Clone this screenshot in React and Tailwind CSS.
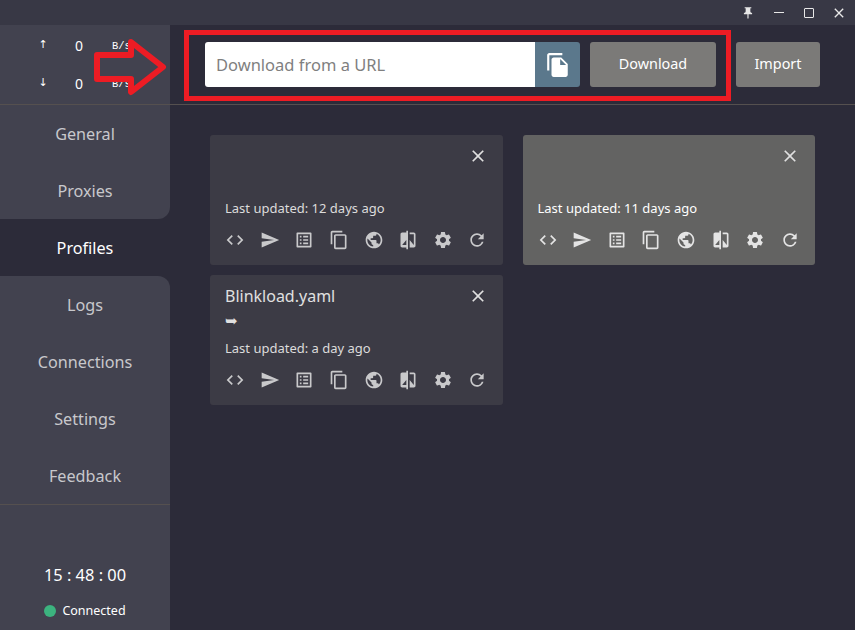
import {
    MdCode, MdSend, MdOutlineListAlt, MdContentCopy, MdPublic, MdCompare, MdSettings, MdRefresh, MdClose, MdFileCopy, MdPushPin,
} from 'react-icons/md';

const font = { fontFamily: '"Noto Sans", "Open Sans", sans-serif' };

const topNav = ['General', 'Proxies'];
const bottomNav = ['Logs', 'Connections', 'Settings', 'Feedback'];
const actions = [MdCode, MdSend, MdOutlineListAlt, MdContentCopy, MdPublic, MdCompare, MdSettings, MdRefresh];

function NavItem({ label, active }) {
    return (
        <div className={`flex h-[57px] items-center justify-center pt-[2px] text-[16.2px] ${active ? 'text-white' : 'text-[#c8c8cc]'}`}>
            {label}
        </div>
    );
}

function StatRow({ arrow }) {
    return (
        <div className="flex h-[38px] items-center pl-[38px] text-white">
            <span className="w-[10px] text-center font-['DejaVu_Sans',sans-serif] text-[11px]">{arrow}</span>
            <span className="ml-[21px] w-[20px] text-center text-[14px]">0</span>
            <span className="ml-[23px] pt-[3px] font-['Liberation_Mono',monospace] text-[10.5px]">B/s</span>
        </div>
    );
}

function ProfileCard({ title, subtitle, updated, selected }) {
    return (
        <div className={`h-[130px] rounded-[3px] px-[15px] pt-[8px] ${selected ? 'bg-[#636362]' : 'bg-[#3c3b45]'}`}>
            <div className="flex h-[26px] items-center justify-between text-[16px] text-[#e0e0e0]">
                <span>{title}</span>
                <MdClose className="size-[20px] text-[#e0e0e0]" />
            </div>
            <div className="flex h-[26px] items-center pb-[3px] text-[15px] text-[#e0e0e0]">{subtitle}</div>
            <div className={`flex h-[26px] items-center pt-[2px] text-[13px] ${selected ? 'text-white' : 'text-[#dcdcdc]'}`}>Last updated: {updated}</div>
            <div className={`mt-[9px] flex h-[20px] justify-between ${selected ? 'text-[#e4e4e4]' : 'text-[#c9c9cb]'}`}>
                {actions.map((Icon, i) => (
                    <Icon key={i} className="size-[20px]" />
                ))}
            </div>
        </div>
    );
}

export default function App() {
    return (
        <div className="relative flex h-[630px] w-[855px] flex-col overflow-hidden bg-[#2c2b39]" style={font}>
            {/* title bar */}
            <div className="flex h-[25px] items-center justify-end bg-[#383845] pr-[1px] text-[#e8e8e8]">
                <span className="flex w-[30px] justify-center"><MdPushPin className="size-[14px]" /></span>
                <span className="flex w-[31px] justify-center"><span className="h-[1.5px] w-[10px] bg-[#e8e8e8]" /></span>
                <span className="flex w-[30px] justify-center"><span className="size-[10px] rounded-[1px] border border-[#e8e8e8]" /></span>
                <span className="flex w-[30px] justify-center"><MdClose className="size-[16px]" /></span>
            </div>

            <div className="flex min-h-0 flex-1">
                {/* sidebar */}
                <div className="flex w-[170px] flex-col">
                    <div className="rounded-br-[12px] bg-[#42424f]">
                        <div className="flex h-[80px] flex-col justify-center border-b border-[#55504f]">
                            <StatRow arrow="↑" />
                            <StatRow arrow="↓" />
                        </div>
                        {topNav.map((n) => <NavItem key={n} label={n} />)}
                    </div>
                    <NavItem label="Profiles" active />
                    <div className="flex flex-1 flex-col rounded-tr-[12px] bg-[#42424f]">
                        {bottomNav.map((n) => <NavItem key={n} label={n} />)}
                        <div className="flex flex-1 flex-col items-center border-t border-[#55504f] pt-[58px] text-white">
                            <div className="text-[16.4px] leading-[24px]">15 : 48 : 00</div>
                            <div className="mt-[15px] flex items-center gap-[6px] text-[12.5px] leading-[18px]">
                                <span className="size-[12px] rounded-full bg-[#3cb37f]" />
                                Connected
                            </div>
                        </div>
                    </div>
                </div>

                {/* main */}
                <div className="flex min-w-0 flex-1 flex-col">
                    <div className="flex h-[80px] items-start border-b border-[#55504f] pt-[17px] pl-[35px]">
                        <div className="flex h-[45px] w-[375px] overflow-hidden rounded-[3px]">
                            <div className="flex w-[330px] items-center bg-white px-[11px] pt-[2px] text-[16.5px] text-[#7f7f7f]">Download from a URL</div>
                            <div className="flex w-[45px] items-center justify-center bg-[#5b788c] text-white">
                                <MdFileCopy className="size-[26px]" />
                            </div>
                        </div>
                        <div className="ml-[10px] flex h-[45px] w-[126px] items-center justify-center rounded-[3px] bg-[#7b7a78] pb-[1px] text-[14.4px] text-white">Download</div>
                        <div className="ml-[20px] flex h-[45px] w-[84px] items-center justify-center rounded-[3px] bg-[#7b7a78] pb-[1px] text-[14.4px] text-white">Import</div>
                    </div>
                    <div className="grid grid-cols-2 gap-x-[20px] gap-y-[10px] px-[40px] pt-[30px]">
                        <ProfileCard updated="12 days ago" />
                        <ProfileCard updated="11 days ago" selected />
                        <ProfileCard title="Blinkload.yaml" subtitle="➥" updated="a day ago" />
                    </div>
                </div>
            </div>

            {/* red annotations on top of the screenshot */}
            <div className="absolute top-[30px] left-[184px] h-[71px] w-[547px] border-[5px] border-[#ed1c24]" />
            <svg className="absolute top-0 left-0" width="180" height="110" viewBox="0 0 180 110" fill="none">
                <path d="M97 55H131V42L163 67L131 92V79H97Z" stroke="#ed1c24" strokeWidth="6" strokeLinejoin="round" />
            </svg>
        </div>
    );
}
